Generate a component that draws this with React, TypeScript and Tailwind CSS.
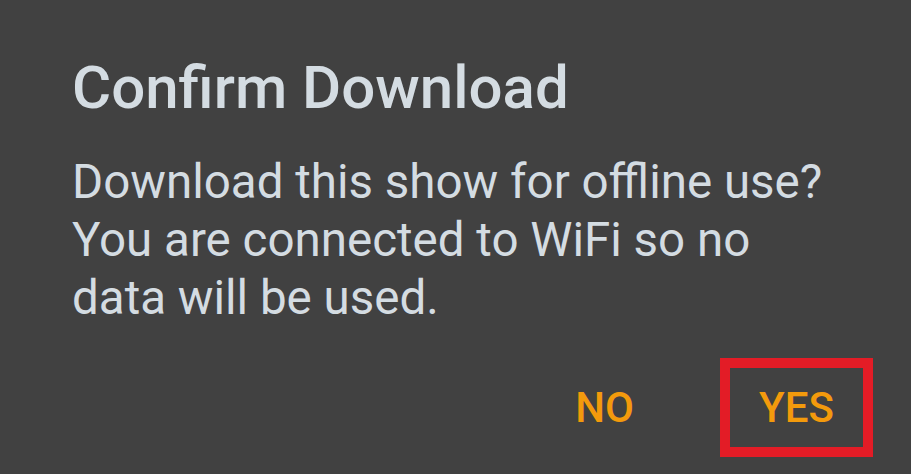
export default function App() {
  return (
    <div
      className="w-[911px] h-[474px] bg-[#414141] overflow-hidden"
      style={{ fontFamily: 'Roboto, "Noto Sans", sans-serif' }}
    >
      <div className="pl-[72px] pt-[53px]">
        <h1 className="text-[60px] leading-[70px] font-medium text-[#d4dce2]">Confirm Download</h1>
        <p className="mt-[30px] w-[752px] text-[47.5px] leading-[58px] text-[#d4dce2]">
          Download this show for offline use? You are connected to WiFi so no data will be used.
        </p>
      </div>
      <div className="flex justify-end items-center pr-[38px] mt-[31px]">
        <button className="h-[99px] px-[14px] mr-[72px] text-[42px] font-medium text-[#f39a0c]">NO</button>
        <button className="w-[153px] h-[99px] border-[10px] border-[#e31c26] text-[42px] font-medium text-[#f39a0c]">
          YES
        </button>
      </div>
    </div>
  );
}
